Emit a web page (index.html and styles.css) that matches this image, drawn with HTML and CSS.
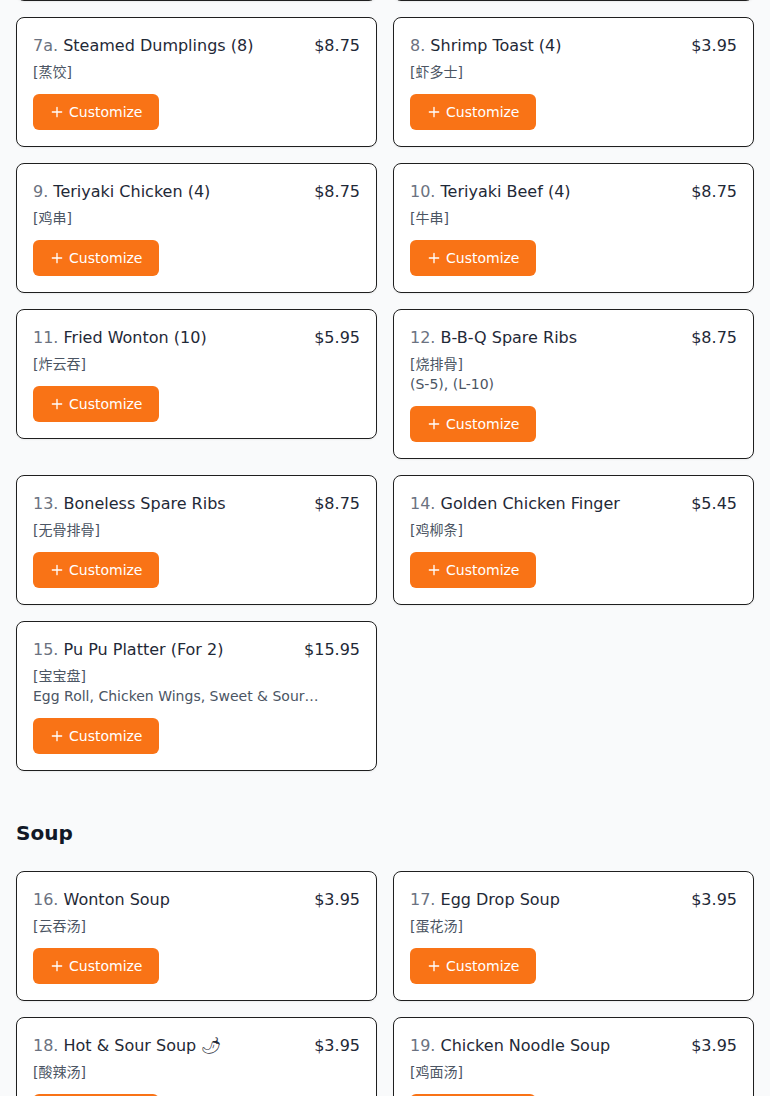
FILE: index.html
```html
<!DOCTYPE html>
<html lang="en">
<head>
    <meta charset="UTF-8">
    <meta name="viewport" content="width=device-width, initial-scale=1.0">
    <title>Menu - Appetizers &amp; Soup</title>
    <link rel="stylesheet" href="styles.css">
</head>
<body>
    <main class="menu">
        <section class="category category-scrolled">
            <div class="item-grid">
                <div class="item-card">
                    <div class="item-head">
                        <div class="item-title"><span class="item-num">6.</span> Chicken Wings (4)</div>
                        <div class="item-price">$6.95</div>
                    </div>
                    <div class="item-cn">[鸡翼]</div>
                    <button class="customize-btn"><svg viewBox="0 0 24 24"><path d="M5 12h14M12 5v14"/></svg>Customize</button>
                </div>
                <div class="item-card">
                    <div class="item-head">
                        <div class="item-title"><span class="item-num">7.</span> Fried Dumplings (8)</div>
                        <div class="item-price">$8.75</div>
                    </div>
                    <div class="item-cn">[锅贴]</div>
                    <button class="customize-btn"><svg viewBox="0 0 24 24"><path d="M5 12h14M12 5v14"/></svg>Customize</button>
                </div>

                <div class="item-card">
                    <div class="item-head">
                        <div class="item-title"><span class="item-num">7a.</span> Steamed Dumplings (8)</div>
                        <div class="item-price">$8.75</div>
                    </div>
                    <div class="item-cn">[蒸饺]</div>
                    <button class="customize-btn"><svg viewBox="0 0 24 24"><path d="M5 12h14M12 5v14"/></svg>Customize</button>
                </div>
                <div class="item-card">
                    <div class="item-head">
                        <div class="item-title"><span class="item-num">8.</span> Shrimp Toast (4)</div>
                        <div class="item-price">$3.95</div>
                    </div>
                    <div class="item-cn">[虾多士]</div>
                    <button class="customize-btn"><svg viewBox="0 0 24 24"><path d="M5 12h14M12 5v14"/></svg>Customize</button>
                </div>

                <div class="item-card">
                    <div class="item-head">
                        <div class="item-title"><span class="item-num">9.</span> Teriyaki Chicken (4)</div>
                        <div class="item-price">$8.75</div>
                    </div>
                    <div class="item-cn">[鸡串]</div>
                    <button class="customize-btn"><svg viewBox="0 0 24 24"><path d="M5 12h14M12 5v14"/></svg>Customize</button>
                </div>
                <div class="item-card">
                    <div class="item-head">
                        <div class="item-title"><span class="item-num">10.</span> Teriyaki Beef (4)</div>
                        <div class="item-price">$8.75</div>
                    </div>
                    <div class="item-cn">[牛串]</div>
                    <button class="customize-btn"><svg viewBox="0 0 24 24"><path d="M5 12h14M12 5v14"/></svg>Customize</button>
                </div>

                <div class="item-card">
                    <div class="item-head">
                        <div class="item-title"><span class="item-num">11.</span> Fried Wonton (10)</div>
                        <div class="item-price">$5.95</div>
                    </div>
                    <div class="item-cn">[炸云吞]</div>
                    <button class="customize-btn"><svg viewBox="0 0 24 24"><path d="M5 12h14M12 5v14"/></svg>Customize</button>
                </div>
                <div class="item-card">
                    <div class="item-head">
                        <div class="item-title"><span class="item-num">12.</span> B-B-Q Spare Ribs</div>
                        <div class="item-price">$8.75</div>
                    </div>
                    <div class="item-cn">[烧排骨]</div>
                    <div class="item-desc">(S-5), (L-10)</div>
                    <button class="customize-btn"><svg viewBox="0 0 24 24"><path d="M5 12h14M12 5v14"/></svg>Customize</button>
                </div>

                <div class="item-card">
                    <div class="item-head">
                        <div class="item-title"><span class="item-num">13.</span> Boneless Spare Ribs</div>
                        <div class="item-price">$8.75</div>
                    </div>
                    <div class="item-cn">[无骨排骨]</div>
                    <button class="customize-btn"><svg viewBox="0 0 24 24"><path d="M5 12h14M12 5v14"/></svg>Customize</button>
                </div>
                <div class="item-card">
                    <div class="item-head">
                        <div class="item-title"><span class="item-num">14.</span> Golden Chicken Finger</div>
                        <div class="item-price">$5.45</div>
                    </div>
                    <div class="item-cn">[鸡柳条]</div>
                    <button class="customize-btn"><svg viewBox="0 0 24 24"><path d="M5 12h14M12 5v14"/></svg>Customize</button>
                </div>

                <div class="item-card">
                    <div class="item-head">
                        <div class="item-title"><span class="item-num">15.</span> Pu Pu Platter (For 2)</div>
                        <div class="item-price">$15.95</div>
                    </div>
                    <div class="item-cn">[宝宝盘]</div>
                    <div class="item-desc clamp">Egg Roll, Chicken Wings, Sweet &amp; Sour Chicken, Teriyaki Beef, Fried Wonton, Spare Ribs</div>
                    <button class="customize-btn"><svg viewBox="0 0 24 24"><path d="M5 12h14M12 5v14"/></svg>Customize</button>
                </div>
            </div>
        </section>

        <section class="category">
            <h2 class="category-title">Soup</h2>
            <div class="item-grid">
                <div class="item-card">
                    <div class="item-head">
                        <div class="item-title"><span class="item-num">16.</span> Wonton Soup</div>
                        <div class="item-price">$3.95</div>
                    </div>
                    <div class="item-cn">[云吞汤]</div>
                    <button class="customize-btn"><svg viewBox="0 0 24 24"><path d="M5 12h14M12 5v14"/></svg>Customize</button>
                </div>
                <div class="item-card">
                    <div class="item-head">
                        <div class="item-title"><span class="item-num">17.</span> Egg Drop Soup</div>
                        <div class="item-price">$3.95</div>
                    </div>
                    <div class="item-cn">[蛋花汤]</div>
                    <button class="customize-btn"><svg viewBox="0 0 24 24"><path d="M5 12h14M12 5v14"/></svg>Customize</button>
                </div>

                <div class="item-card">
                    <div class="item-head">
                        <div class="item-title"><span class="item-num">18.</span> Hot &amp; Sour Soup 🌶</div>
                        <div class="item-price">$3.95</div>
                    </div>
                    <div class="item-cn">[酸辣汤]</div>
                    <button class="customize-btn"><svg viewBox="0 0 24 24"><path d="M5 12h14M12 5v14"/></svg>Customize</button>
                </div>
                <div class="item-card">
                    <div class="item-head">
                        <div class="item-title"><span class="item-num">19.</span> Chicken Noodle Soup</div>
                        <div class="item-price">$3.95</div>
                    </div>
                    <div class="item-cn">[鸡面汤]</div>
                    <button class="customize-btn"><svg viewBox="0 0 24 24"><path d="M5 12h14M12 5v14"/></svg>Customize</button>
                </div>
            </div>
        </section>
    </main>
</body>
</html>
```

FILE: styles.css
```css
body {
    margin: 0;
    font-family: "DejaVu Sans", "Noto Sans CJK SC", sans-serif;
    background-color: #f9fafb;
    color: #111827;
}
.menu {
    padding: 0 16px 32px;
}
/* page is shown scrolled: the row above 7a is only visible by its bottom edge */
.category-scrolled {
    margin-top: -129px;
}
.category + .category {
    margin-top: 48px;
}
.category-title {
    margin: 0 0 24px;
    font-size: 20px;
    line-height: 28px;
    font-weight: bold;
    color: #111827;
}
.item-grid {
    display: grid;
    grid-template-columns: 1fr 1fr;
    gap: 16px;
    align-items: start;
}
.item-card {
    background-color: #ffffff;
    border: 1px solid #1f1f1f;
    border-radius: 8px;
    padding: 16px;
    box-shadow: 0 1px 2px rgba(0, 0, 0, 0.06);
    min-width: 0;
}
.item-head {
    display: flex;
    justify-content: space-between;
    gap: 12px;
    font-size: 16px;
    line-height: 24px;
}
.item-title {
    color: #1f2937;
}
.item-num {
    color: #6b7280;
}
.item-price {
    color: #1f2937;
    white-space: nowrap;
}
.item-cn {
    margin-top: 4px;
    font-size: 14px;
    line-height: 20px;
    color: #4b5563;
}
.item-desc {
    font-size: 14px;
    line-height: 20px;
    color: #4b5563;
}
.item-desc.clamp {
    display: -webkit-box;
    -webkit-line-clamp: 1;
    -webkit-box-orient: vertical;
    overflow: hidden;
}
.customize-btn {
    display: flex;
    align-items: center;
    gap: 4px;
    margin-top: 12px;
    height: 36px;
    padding: 0 16px;
    background-color: #f97316;
    color: #ffffff;
    border: none;
    border-radius: 6px;
    font-family: inherit;
    font-size: 14px;
    cursor: pointer;
}
.customize-btn svg {
    width: 16px;
    height: 16px;
    fill: none;
    stroke: #ffffff;
    stroke-width: 2;
    stroke-linecap: round;
}
.customize-btn:hover {
    background-color: #ea580c;
}
```
